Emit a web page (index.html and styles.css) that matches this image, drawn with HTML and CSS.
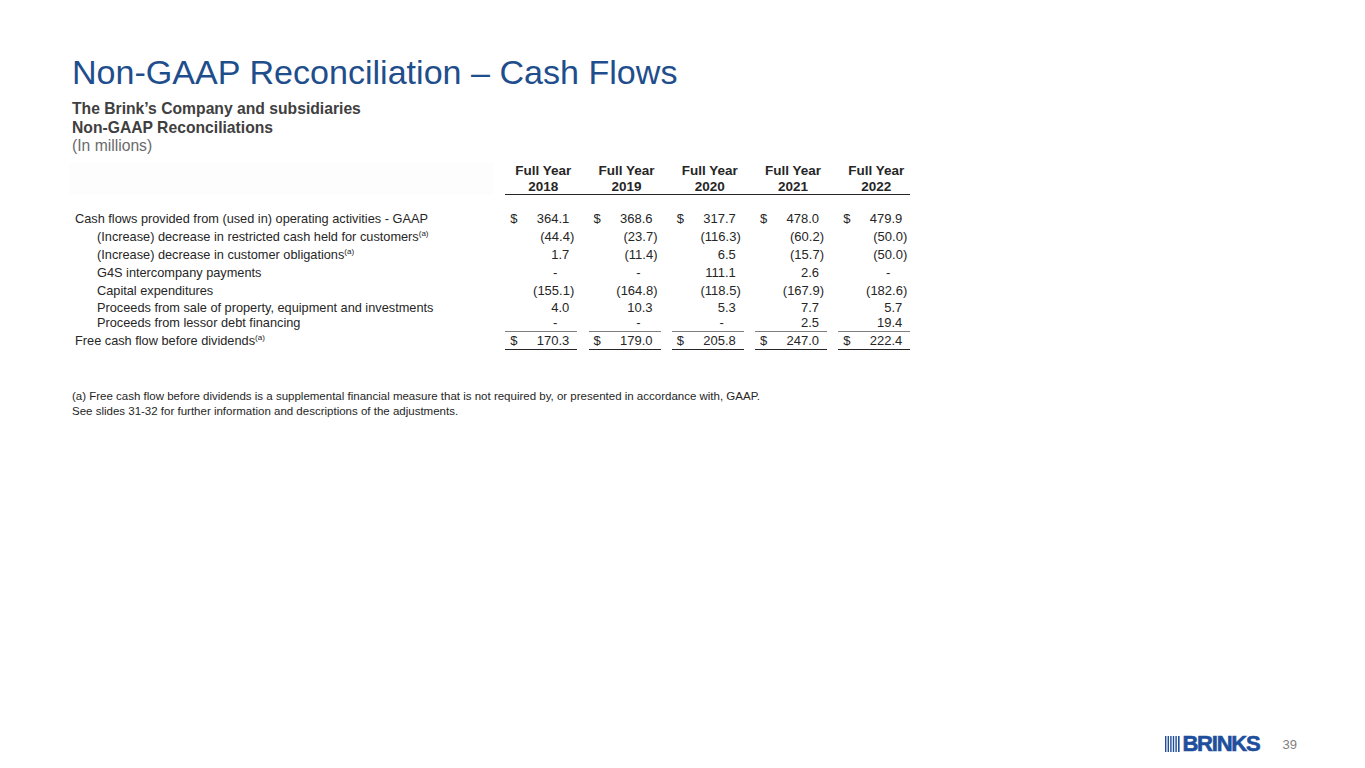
FILE: index.html
```html
<!DOCTYPE html>
<html lang="en">
<head>
<meta charset="utf-8">
<title>Non-GAAP Reconciliation – Cash Flows</title>
<link rel="stylesheet" href="styles.css">
</head>
<body>
<div class="slide">
  <h1 class="title">Non-GAAP Reconciliation – Cash Flows</h1>
  <div class="subtitle">
    <div class="subtitle__line subtitle__line--bold">The Brink’s Company and subsidiaries</div>
    <div class="subtitle__line subtitle__line--bold">Non-GAAP Reconciliations</div>
    <div class="subtitle__line subtitle__line--light">(In millions)</div>
  </div>

  <div class="fin">
    <div class="fin__row fin__row--head">
      <div class="fin__label fin__label--head"></div>
      <div class="fin__year">Full Year<br>2018</div>
      <div class="fin__year">Full Year<br>2019</div>
      <div class="fin__year">Full Year<br>2020</div>
      <div class="fin__year">Full Year<br>2021</div>
      <div class="fin__year">Full Year<br>2022</div>
    </div>
    <div class="fin__rule"></div>

    <div class="fin__row">
      <div class="fin__label">Cash flows provided from (used in) operating activities - GAAP</div>
      <div class="fin__cell"><span class="cur">$</span><span class="num">364.1</span></div>
      <div class="fin__cell"><span class="cur">$</span><span class="num">368.6</span></div>
      <div class="fin__cell"><span class="cur">$</span><span class="num">317.7</span></div>
      <div class="fin__cell"><span class="cur">$</span><span class="num">478.0</span></div>
      <div class="fin__cell"><span class="cur">$</span><span class="num">479.9</span></div>
    </div>
    <div class="fin__row">
      <div class="fin__label fin__label--indent">(Increase) decrease in restricted cash held for customers<sup class="note">(a)</sup></div>
      <div class="fin__cell"><span class="num num--neg">(44.4)</span></div>
      <div class="fin__cell"><span class="num num--neg">(23.7)</span></div>
      <div class="fin__cell"><span class="num num--neg">(116.3)</span></div>
      <div class="fin__cell"><span class="num num--neg">(60.2)</span></div>
      <div class="fin__cell"><span class="num num--neg">(50.0)</span></div>
    </div>
    <div class="fin__row">
      <div class="fin__label fin__label--indent">(Increase) decrease in customer obligations<sup class="note">(a)</sup></div>
      <div class="fin__cell"><span class="num">1.7</span></div>
      <div class="fin__cell"><span class="num num--neg">(11.4)</span></div>
      <div class="fin__cell"><span class="num">6.5</span></div>
      <div class="fin__cell"><span class="num num--neg">(15.7)</span></div>
      <div class="fin__cell"><span class="num num--neg">(50.0)</span></div>
    </div>
    <div class="fin__row">
      <div class="fin__label fin__label--indent">G4S intercompany payments</div>
      <div class="fin__cell"><span class="num num--dash">-</span></div>
      <div class="fin__cell"><span class="num num--dash">-</span></div>
      <div class="fin__cell"><span class="num">111.1</span></div>
      <div class="fin__cell"><span class="num">2.6</span></div>
      <div class="fin__cell"><span class="num num--dash">-</span></div>
    </div>
    <div class="fin__row">
      <div class="fin__label fin__label--indent">Capital expenditures</div>
      <div class="fin__cell"><span class="num num--neg">(155.1)</span></div>
      <div class="fin__cell"><span class="num num--neg">(164.8)</span></div>
      <div class="fin__cell"><span class="num num--neg">(118.5)</span></div>
      <div class="fin__cell"><span class="num num--neg">(167.9)</span></div>
      <div class="fin__cell"><span class="num num--neg">(182.6)</span></div>
    </div>
    <div class="fin__row fin__row--tight">
      <div class="fin__label fin__label--indent">Proceeds from sale of property, equipment and investments</div>
      <div class="fin__cell"><span class="num">4.0</span></div>
      <div class="fin__cell"><span class="num">10.3</span></div>
      <div class="fin__cell"><span class="num">5.3</span></div>
      <div class="fin__cell"><span class="num">7.7</span></div>
      <div class="fin__cell"><span class="num">5.7</span></div>
    </div>
    <div class="fin__row fin__row--tight">
      <div class="fin__label fin__label--indent">Proceeds from lessor debt financing</div>
      <div class="fin__cell"><span class="num num--dash">-</span></div>
      <div class="fin__cell"><span class="num num--dash">-</span></div>
      <div class="fin__cell"><span class="num num--dash">-</span></div>
      <div class="fin__cell"><span class="num">2.5</span></div>
      <div class="fin__cell"><span class="num">19.4</span></div>
    </div>
    <div class="fin__row fin__row--total">
      <div class="fin__label">Free cash flow before dividends<sup class="note">(a)</sup></div>
      <div class="fin__cell fin__cell--total"><span class="cur">$</span><span class="num">170.3</span></div>
      <div class="fin__cell fin__cell--total"><span class="cur">$</span><span class="num">179.0</span></div>
      <div class="fin__cell fin__cell--total"><span class="cur">$</span><span class="num">205.8</span></div>
      <div class="fin__cell fin__cell--total"><span class="cur">$</span><span class="num">247.0</span></div>
      <div class="fin__cell fin__cell--total"><span class="cur">$</span><span class="num">222.4</span></div>
    </div>
  </div>

  <div class="footnote">
    <div>(a) Free cash flow before dividends is a supplemental financial measure that is not required by, or presented in accordance with, GAAP.</div>
    <div>See slides 31-32 for further information and descriptions of the adjustments.</div>
  </div>

  <div class="footer">
    <div class="logo">
      <svg class="logo__bars" width="15" height="16" viewBox="0 0 15 16" aria-hidden="true">
        <rect x="0" y="0" width="1.4" height="16"/>
        <rect x="2.6" y="0" width="1.4" height="16"/>
        <rect x="5.2" y="0" width="1.4" height="16"/>
        <rect x="7.8" y="0" width="1.4" height="16"/>
        <rect x="10.4" y="0" width="1.4" height="16"/>
        <rect x="13" y="0" width="1.6" height="16"/>
      </svg>
      <span class="logo__word">BRINKS</span>
    </div>
    <div class="page-num">39</div>
  </div>
</div>
</body>
</html>
```

FILE: styles.css
```css
html, body {
  margin: 0;
  padding: 0;
  background: #ffffff;
}

.slide {
  width: 1365px;
  height: 768px;
  box-sizing: border-box;
  padding: 52px 0 0 72px;
  display: flex;
  flex-direction: column;
  font-family: "Liberation Sans", Arial, sans-serif;
  color: #262626;
  overflow: hidden;
}

.title {
  margin: 0;
  font-size: 34.1px;
  line-height: 40px;
  font-weight: normal;
  color: #1f4e8c;
}

.subtitle {
  margin-top: 8px;
  font-size: 15.7px;
  line-height: 18.5px;
}

.subtitle__line--bold {
  font-weight: bold;
  color: #404040;
}

.subtitle__line--light {
  color: #6b6b6b;
}

/* financial table */
.fin {
  margin-top: 7px;
  font-size: 13px;
  color: #262626;
}

.fin__row {
  display: grid;
  grid-template-columns: 422px repeat(5, 72px);
  column-gap: 11.25px;
  height: 18px;
  align-items: center;
}

.fin__row--tight {
  height: 15.5px;
}

.fin__row--head {
  height: 31px;
  align-items: stretch;
}

.fin__label {
  padding-left: 3px;
  white-space: nowrap;
  font-size: 12.75px;
}

.fin__label--head {
  background: #fdfdfd;
  margin-left: -3px;
}

.fin__label--indent {
  padding-left: 25px;
}

.fin__year {
  font-weight: bold;
  font-size: 13.5px;
  text-align: center;
  line-height: 16px;
  padding-left: 4px;
}

.fin__rule {
  margin-left: 433px;
  width: 405px;
  border-top: 1px solid #262626;
  margin-bottom: 15px;
}

.fin__cell {
  display: flex;
  align-items: center;
  height: 100%;
  box-sizing: border-box;
}

.cur {
  padding-left: 5px;
}

.num {
  margin-left: auto;
  padding-right: 8px;
}

.num--neg {
  padding-right: 3px;
}

.num--dash {
  padding-right: 20px;
}

.fin__row--total {
  height: 19px;
}

.fin__cell--total {
  border-top: 1px solid #7f7f7f;
  border-bottom: 1px solid #262626;
}

.note {
  font-size: 8px;
  line-height: 0;
  vertical-align: 5px;
}

.footnote {
  margin-top: 39px;
  font-size: 11.5px;
  line-height: 15px;
  color: #262626;
}

.footer {
  margin-top: auto;
  margin-bottom: 16px;
  margin-right: 68px;
  display: flex;
  justify-content: flex-end;
  align-items: center;
  gap: 23px;
}

.logo {
  display: flex;
  align-items: center;
  gap: 2px;
  color: #1f4f9c;
}

.logo__bars {
  fill: #1f4f9c;
  display: block;
}

.logo__word {
  font-size: 22px;
  line-height: 16px;
  font-weight: bold;
  letter-spacing: -1.2px;
  -webkit-text-stroke: 0.6px #1f4f9c;
}

.page-num {
  font-size: 13px;
  color: #7f7f7f;
}
```
